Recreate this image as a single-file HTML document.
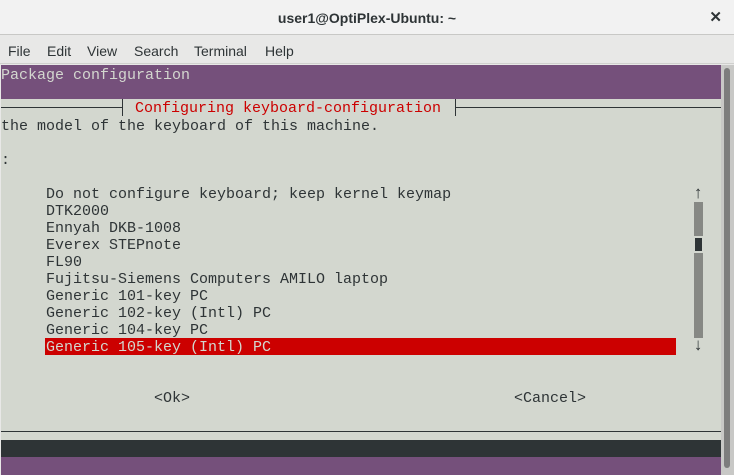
<!DOCTYPE html>
<html><head><style>
*{margin:0;padding:0;box-sizing:border-box}
body{width:734px;height:475px;overflow:hidden;background:#e8e8e7;font-family:"Liberation Sans",sans-serif;position:relative}
.title{position:absolute;left:0;top:0;width:734px;height:35px;background:#f2f2f2;border-bottom:1px solid #c8c8c6;text-align:center;font-size:14px;font-weight:bold;color:#2e3436;line-height:36px}
.close{position:absolute;right:12px;top:0;font-size:15px;font-weight:bold;color:#2e3436}
.menu{position:absolute;left:0;top:36px;width:734px;height:28px;background:#e8e8e7;font-size:14px;color:#2e3436;border-bottom:1px solid #d0d0ce}
.menu span{position:absolute;top:7px}
.term{position:absolute;left:1px;top:65px;width:720px;height:410px;background:#d3d7cf;overflow:hidden;font-family:"Liberation Mono",monospace;font-size:15px;color:#2e3436}
.r{position:absolute;height:17px;line-height:17px;white-space:pre}
.t{transform:translateY(1px)}
.sb{position:absolute;left:721px;top:65px;width:13px;height:410px;background:#c8c8c6}
.sb div{position:absolute;left:3px;top:3px;width:6px;height:400px;background:#7d7d7d;border-radius:3px}
</style></head><body>
<div class="title">user1@OptiPlex-Ubuntu: ~<span class="close">✕</span></div>
<div class="menu"><span style="left:8px">File</span><span style="left:47px">Edit</span><span style="left:87px">View</span><span style="left:134px">Search</span><span style="left:194px">Terminal</span><span style="left:265px">Help</span></div>
<div class="term">
<div style="position:absolute;left:0;top:0;width:720px;height:34px;background:#75507b"></div>
<div class="r t" style="top:1px;left:0;color:#d3d7cf">Package configuration</div>
<div style="position:absolute;left:0;top:42px;width:121px;height:1px;background:#2e3436"></div>
<div style="position:absolute;left:121px;top:34px;width:1px;height:17px;background:#2e3436"></div>
<div class="r t" style="top:34px;left:134px;color:#cc0000">Configuring keyboard-configuration</div>
<div style="position:absolute;left:454px;top:34px;width:1px;height:17px;background:#2e3436"></div>
<div style="position:absolute;left:454px;top:42px;width:266px;height:1px;background:#2e3436"></div>
<div class="r t" style="top:52px;left:0">the model of the keyboard of this machine.</div>
<div class="r t" style="top:86px;left:0">:</div>
<div class="r t" style="top:120px;left:45px">Do not configure keyboard; keep kernel keymap
DTK2000
Ennyah DKB-1008
Everex STEPnote
FL90
Fujitsu-Siemens Computers AMILO laptop
Generic 101-key PC
Generic 102-key (Intl) PC
Generic 104-key PC</div>
<div class="r" style="top:273px;left:44px;width:631px;background:#cc0000;color:#d3d7cf;padding-left:1px;padding-top:1px">Generic 105-key (Intl) PC</div>
<div class="r t" style="top:120px;left:692px;font-size:17px;font-weight:bold">↑</div>
<div style="position:absolute;left:693px;top:137px;width:9px;height:34px;background:#868884"></div>
<div style="position:absolute;left:694px;top:173px;width:7px;height:13px;background:#2e3436"></div>
<div style="position:absolute;left:693px;top:188px;width:9px;height:85px;background:#868884"></div>
<div class="r t" style="top:272px;left:692px;font-size:17px;font-weight:bold">↓</div>
<div class="r t" style="top:324px;left:153px">&lt;Ok&gt;</div>
<div class="r t" style="top:324px;left:513px">&lt;Cancel&gt;</div>
<div style="position:absolute;left:0;top:366px;width:720px;height:1px;background:#2e3436"></div>
<div style="position:absolute;left:0;top:375px;width:720px;height:17px;background:#2e3436"></div>
<div style="position:absolute;left:0;top:392px;width:720px;height:18px;background:#75507b"></div>
</div>
<div class="sb"><div></div></div>
</body></html>
